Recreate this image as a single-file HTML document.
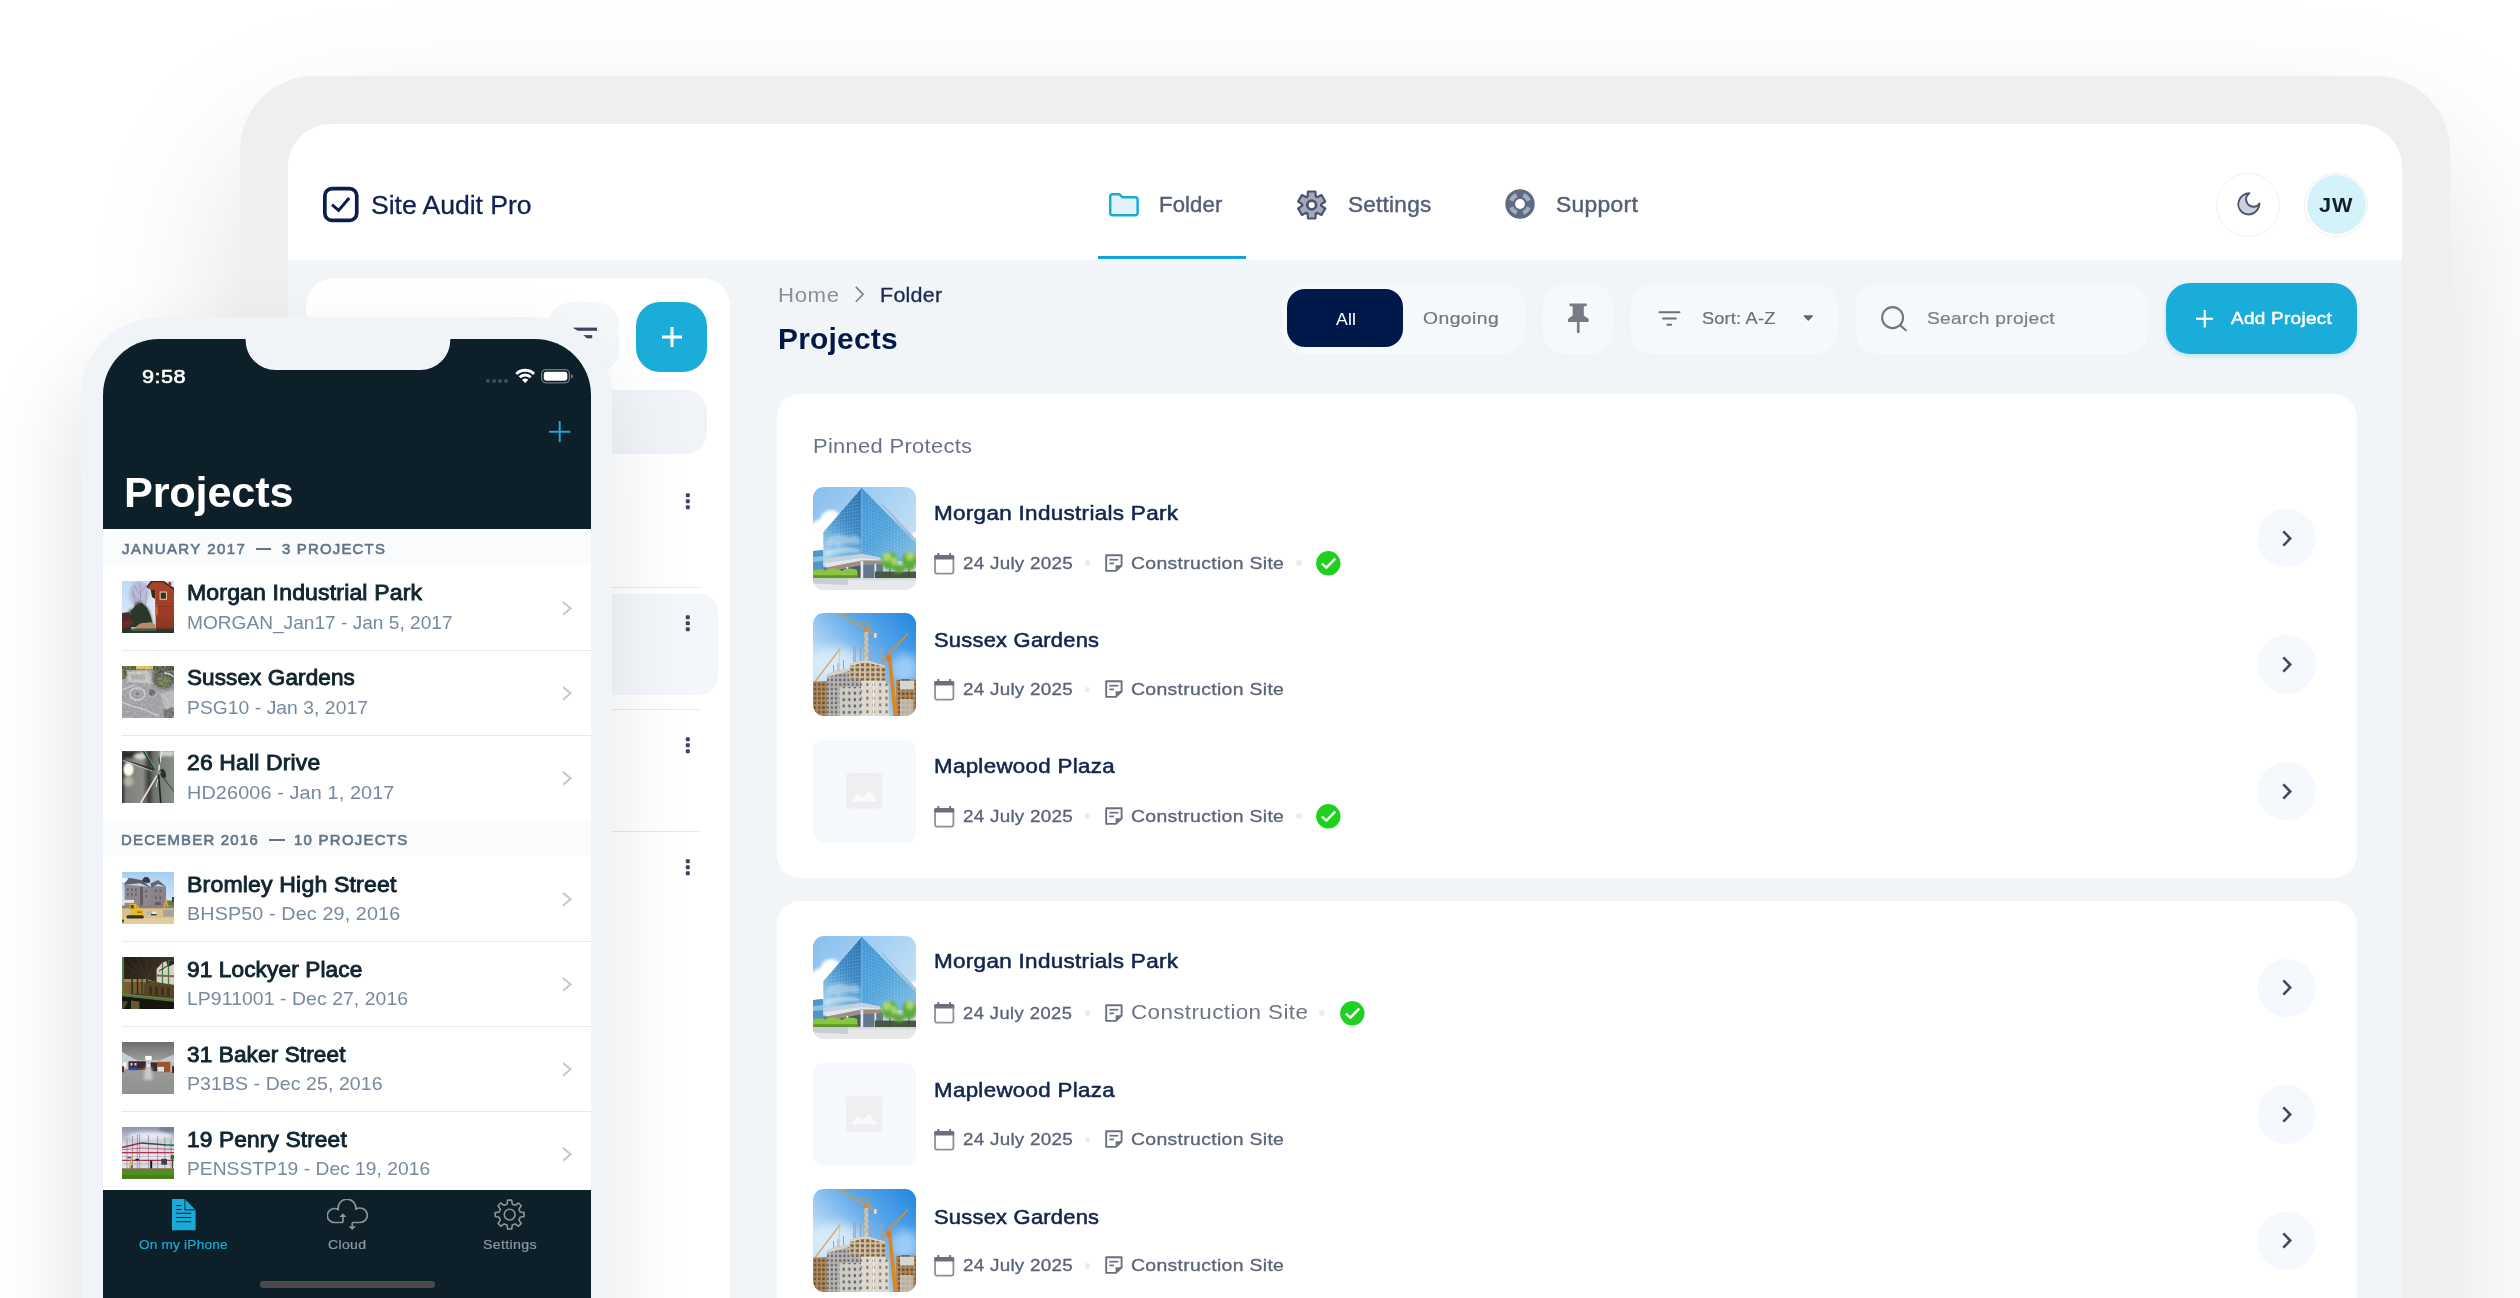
<!DOCTYPE html><html><head><meta charset="utf-8"><title>Site Audit Pro</title><style>
html,body{margin:0;padding:0;width:2520px;height:1298px;overflow:hidden}
body{background:#fff;position:relative;font-family:"Liberation Sans",sans-serif}
#root{position:absolute;left:0;top:0;width:2520px;height:1298px;overflow:hidden;background:#fff}
.a{position:absolute;display:block}
.t{position:absolute;line-height:0;white-space:nowrap;display:block}
#tab{left:240px;top:76px;width:2210px;height:1500px;border-radius:74px;background:#efefef;box-shadow:0 75px 160px rgba(0,0,0,.13)}
#scr{left:288px;top:124px;width:2114px;height:1400px;border-radius:43px;background:#f1f5f8;overflow:hidden}
#scr>.o{left:-288px;top:-124px}
#ph{left:81px;top:317px;width:531px;height:1300px;border-radius:79px;background:#f0f4f8;box-shadow:-8px 45px 90px rgba(0,0,0,.115)}
#pscr{left:103px;top:339px;width:488px;height:1300px;border-radius:56px;background:#fff;overflow:hidden}
#pscr>.o{left:-103px;top:-339px}
</style></head><body>
<div id="root">
<svg width="0" height="0" style="position:absolute"><symbol id="p_glass" viewBox="0 0 103 103">
<defs>
<linearGradient id="gA" x1="0" y1="0" x2="1" y2="0.8"><stop offset="0" stop-color="#86bdee"/><stop offset=".5" stop-color="#aad3f4"/><stop offset="1" stop-color="#cfe6f8"/></linearGradient>
<linearGradient id="gB" x1="0.9" y1="0" x2="0.35" y2="1"><stop offset="0" stop-color="#256fa9"/><stop offset=".45" stop-color="#3685c1"/><stop offset=".72" stop-color="#5fa5d6"/><stop offset="1" stop-color="#a0cde9"/></linearGradient>
<linearGradient id="gC" x1="0" y1="0" x2="0.8" y2="1"><stop offset="0" stop-color="#3a93d2"/><stop offset=".55" stop-color="#4fa2da"/><stop offset="1" stop-color="#79b9e3"/></linearGradient>
<pattern id="gG" width="2.6" height="3.3" patternUnits="userSpaceOnUse" patternTransform="skewY(-8)"><path d="M0,0 H2.6 M0,0 V3.3" stroke="#cfeaff" stroke-width="0.55" opacity=".5"/></pattern>
<pattern id="gH" width="2.9" height="3.3" patternUnits="userSpaceOnUse" patternTransform="skewY(20)"><path d="M0,0 H2.9 M0,0 V3.3" stroke="#d7eeff" stroke-width="0.5" opacity=".45"/></pattern>
<filter id="gF" x="-5%" y="-5%" width="110%" height="110%"><feGaussianBlur stdDeviation=".55"/></filter>
<filter id="gF2" x="-20%" y="-20%" width="140%" height="140%"><feGaussianBlur stdDeviation="1.6"/></filter>
</defs>
<rect width="103" height="103" fill="url(#gA)"/>
<g filter="url(#gF)">
<g fill="#fff" filter="url(#gF2)"><ellipse cx="4" cy="56" rx="11" ry="13"/><ellipse cx="18" cy="35" rx="11" ry="12"/><ellipse cx="9" cy="44" rx="12" ry="12"/><ellipse cx="22" cy="48" rx="8" ry="10"/><ellipse cx="102" cy="50" rx="4" ry="5"/></g>
<polygon points="0,64 8,63 10.3,63 10.3,84 0,84" fill="#4f97cb"/><polygon points="0,70 10.3,69 10.3,74 0,75" fill="#8cc1e3"/>
<polygon points="48.8,0.9 10.3,45.3 10.3,78 48.8,70" fill="url(#gB)"/>
<polygon points="48.8,0.9 103,56 103,76 67.7,72 48.8,70" fill="url(#gC)"/>
<polygon points="48.8,0.9 10.3,45.3 10.3,72 48.8,66.8" fill="url(#gG)"/>
<polygon points="48.8,0.9 103,56 103,72 48.8,66.8" fill="url(#gH)"/>
<polygon points="67.7,17 70,17.4 103,52 103,56.5" fill="#9fb9d0" opacity=".85"/>
<path d="M14,52 Q24,44 36,50 Q44,46 47,52 L47,58 Q34,54 26,60 Q18,56 14,60 Z" fill="#cfe7f6" opacity=".5" filter="url(#gF2)"/>
<path d="M12,64 Q30,58 47,62 L47,66 Q30,63 12,69 Z" fill="#e3f2fb" opacity=".55" filter="url(#gF2)"/>
<path d="M48.8,4 V68" stroke="#7fc0ea" stroke-width=".8" opacity=".8"/>
<polygon points="10.3,72 48.8,66.8 67.7,70.3 67.7,73 48.8,73.5 13.9,80.6 10.3,78" fill="#c3d2df"/>
<polygon points="10.3,76.5 48.8,71 67.7,72.8 67.7,73.5 48.8,73.5 13.9,80.6" fill="#dfe7ee"/>
<polygon points="13.9,80.6 48.8,73.5 67.7,73.5 70,77 48.8,77.5 18,84" fill="#a28d7b"/>
<polygon points="10.3,80 14,80.6 18,84 48.8,77.5 70,77 70,91.4 10.3,91.4" fill="#66788a"/>
<polygon points="20,84 48,78.5 48,90 20,90" fill="#3e4d5b" opacity=".7"/>
<g fill="#e6ebef"><rect x="23" y="82" width="1.5" height="9"/><rect x="33.4" y="80" width="1.8" height="11"/><rect x="47.6" y="74" width="2.6" height="17.5"/><rect x="61.5" y="77" width="1.7" height="14"/></g>
<rect x="62" y="84.5" width="41" height="6.9" fill="#4a5843"/>
<g filter="url(#gF2)"><g fill="#5faa3c"><ellipse cx="76.5" cy="74" rx="8.5" ry="9"/><ellipse cx="96.5" cy="74" rx="7.5" ry="9.5"/><ellipse cx="86" cy="82" rx="6" ry="4"/></g>
<g fill="#a5d86a"><ellipse cx="74" cy="70" rx="4.5" ry="4.5"/><ellipse cx="81" cy="74" rx="3" ry="4"/><ellipse cx="97" cy="69" rx="4" ry="4.5"/></g></g>
<g stroke="#3a3a2c" stroke-width=".7"><path d="M77,82 V91 M96,82 V91"/></g>
<g fill="#8bc540"><rect x="0" y="83.8" width="44.5" height="7.6" rx="3"/><ellipse cx="6" cy="84.5" rx="6" ry="2.2"/><ellipse cx="20" cy="84" rx="8" ry="2.4"/><ellipse cx="37" cy="84" rx="7.5" ry="2.6"/></g>
<rect x="0" y="88.2" width="44.5" height="3.2" fill="#5c9a2e"/>
<rect x="0" y="91.4" width="103" height="11.6" fill="#e7e8e9"/>
<polygon points="0,91.8 35,91.8 35,98 0,96.4" fill="#c9cdd1"/>
<rect x="35" y="91.4" width="68" height="2" fill="#d9dbdd"/>
</g>
</symbol><symbol id="p_crane" viewBox="0 0 103 103">
<defs>
<linearGradient id="cA" x1="1" y1="0" x2="0" y2=".9"><stop offset="0" stop-color="#1f86e0"/><stop offset=".35" stop-color="#5aa7ea"/><stop offset=".7" stop-color="#b4d7f6"/><stop offset="1" stop-color="#dcecfb"/></linearGradient>
<pattern id="cG" width="5.2" height="4.9" patternUnits="userSpaceOnUse"><rect width="5.2" height="4.9" fill="#d3c3a6"/><rect x="1.1" y="1.3" width="3.2" height="3" fill="#7b5f41"/></pattern>
<pattern id="cH" width="4.2" height="4.6" patternUnits="userSpaceOnUse"><rect width="4.2" height="4.6" fill="#b9b4ab"/><rect x=".9" y="1.2" width="2.3" height="2.6" fill="#5f6b7d"/></pattern>
<pattern id="cI" width="4.2" height="4.6" patternUnits="userSpaceOnUse"><rect width="4.2" height="4.6" fill="#b48a5c"/><rect x=".9" y="1.2" width="2.4" height="2.6" fill="#6b5038"/></pattern>
<pattern id="cP" width="6.4" height="6.8" patternUnits="userSpaceOnUse"><rect width="6.4" height="6.8" fill="#dfd9ce"/><rect x="2.2" y="2.2" width="1.9" height="2.8" fill="#6f6a66"/></pattern>
<pattern id="cQ" width="5.6" height="6.4" patternUnits="userSpaceOnUse"><rect width="5.6" height="6.4" fill="#cfccc5"/><rect x="1.6" y="2" width="2.2" height="2.8" fill="#59606c"/></pattern>
<filter id="cF" x="-5%" y="-5%" width="110%" height="110%"><feGaussianBlur stdDeviation=".5"/></filter>
<filter id="cF2" x="-30%" y="-30%" width="160%" height="160%"><feGaussianBlur stdDeviation="5"/></filter>
</defs>
<rect width="103" height="103" fill="url(#cA)"/>
<ellipse cx="22" cy="50" rx="26" ry="16" fill="#e6f2fc" opacity=".7" filter="url(#cF2)"/>
<ellipse cx="92" cy="55" rx="14" ry="14" fill="#cfe5f9" opacity=".6" filter="url(#cF2)"/>
<g filter="url(#cF)">
<g stroke="#d6ab6e" fill="none"><path d="M2.2,68.5 L27.3,35.4" stroke-width="1.5"/><path d="M26.5,37 V58" stroke-width=".5" stroke="#b9b9b9"/></g>
<g stroke="#97a4b6" stroke-width="1"><path d="M40.8,31.5 V49 M42.3,33 V49 M47.5,34 V48 M57.8,33.5 V47.5 M68.1,33.5 V50 M69.9,35 V50 M20.5,52 V60 M25,50 V58 M30.5,47 V56"/></g>
<rect x="83" y="66.8" width="20" height="36.2" fill="url(#cI)"/>
<rect x="87" y="67.5" width="14" height="9" fill="#d9d6d0"/><rect x="88" y="66" width="9" height="1.6" fill="#5b6a8c"/>
<rect x="87" y="86" width="13" height="17" fill="#cfcac0" opacity=".75"/>
<polygon points="0,68.5 14,68 14,103 0,103" fill="url(#cI)"/>
<polygon points="13.9,61.5 22,58 36.3,56 36.3,103 13.9,103" fill="url(#cH)"/>
<polygon points="13.9,61.5 22,58 36.3,56 36.3,58 13.9,64" fill="#d9d2c2"/>
<polygon points="36.3,51.5 52.4,47 72.1,52.4 72.1,68 36.3,68" fill="url(#cG)"/>
<polygon points="36.3,51.5 52.4,47 72.1,52.4 72.1,54 52.4,49 36.3,53.2" fill="#e3d6bd"/>
<rect x="36.3" y="66" width="12" height="37" fill="url(#cH)"/>
<rect x="26.4" y="74" width="22" height="29" fill="url(#cQ)"/>
<polygon points="48,67.7 72.1,67.7 75.7,72 75.7,103 48,103" fill="url(#cP)"/>
<rect x="60" y="67.7" width="1.2" height="35.3" fill="#efeae0"/>
<g stroke="#c99a56" fill="none"><path d="M27.3,0.9 L63.2,22.8" stroke-width="1.8"/><path d="M44,11 L53,8.5 L60,20" stroke-width=".8"/></g>
<rect x="51.5" y="17.5" width="3.6" height="30" fill="#dccba6"/><path d="M51.5,20 l3.6,3 l-3.6,3 l3.6,3 l-3.6,3 l3.6,3 l-3.6,3 l3.6,3 l-3.6,3" stroke="#c08a48" stroke-width=".6" fill="none"/>
<rect x="51" y="13.5" width="4.6" height="5.5" fill="#c4924f"/><rect x="61" y="20" width="2.6" height="4.8" fill="#e6dcc6"/>
<polygon points="74.4,41.7 78,41.7 84.6,103 80.4,103" fill="#d88928"/>
<g stroke="#d88f33" fill="none"><path d="M69.4,47.4 L95.4,20.2" stroke-width="1.6"/><path d="M76,41.7 L70,47" stroke-width="1"/></g>
<rect x="73.6" y="41.7" width="4.6" height="6.3" fill="#cf7f22"/>
</g>
</symbol><symbol id="t1" viewBox="0 0 52 52">
<defs><filter id="tb" x="-3%" y="-3%" width="106%" height="106%"><feGaussianBlur stdDeviation=".45"/></filter><filter id="tb2" x="-30%" y="-30%" width="160%" height="160%"><feGaussianBlur stdDeviation="1.6"/></filter><filter id="tb3" x="-30%" y="-30%" width="160%" height="160%"><feGaussianBlur stdDeviation="3"/></filter><linearGradient id="t1a" x1="0" y1="0" x2=".6" y2="1"><stop offset="0" stop-color="#b7dcf7"/><stop offset=".6" stop-color="#dfe6f6"/><stop offset="1" stop-color="#eceaf4"/></linearGradient>
<linearGradient id="t1b" x1="0" y1="0" x2="0" y2="1"><stop offset="0" stop-color="#a9442b"/><stop offset=".5" stop-color="#a03f28"/><stop offset="1" stop-color="#86351f"/></linearGradient></defs>
<rect width="52" height="52" fill="url(#t1a)"/>
<g filter="url(#tb)">
<ellipse cx="17" cy="13" rx="10" ry="13" fill="#a99dc2" opacity=".55" filter="url(#tb2)"/>
<g stroke="#8d7f9f" stroke-width=".6" opacity=".8" fill="none"><path d="M19,28 L18,2 M19,16 L12,4 M18.5,12 L25,3 M14,28 L11,8 M23,26 L25,10 M18,20 L9,12"/></g>
<path d="M7,30 Q10,26 12,30 L14,22 Q18,19 20,23 L22,24 Q26,26 28,33 L31,44 L7,46 Z" fill="#2e3a2c" filter="url(#tb2)"/>
<polygon points="7,46 9,30 14,24 20,22 25,27 29,36 31,46" fill="#2c372b"/>
<polygon points="0,32 7,31 9,36 9,50 0,50" fill="#4b2d27"/>
<polygon points="24.8,6.5 29.7,0 41,0 52,7.5 52,52 34,52 33.2,24 33.2,9 28.7,9" fill="url(#t1b)"/>
<polygon points="28.7,9 33.2,9 33.2,18 30,16" fill="#4a2418"/>
<path d="M24.8,6.5 L29.7,0.4 L41,0.4 L52,8" stroke="#3c2a29" stroke-width="1.6" fill="none"/>
<rect x="46.5" y="1" width="2.6" height="3.4" fill="#8a3a28"/>
<rect x="37.6" y="10.5" width="7.4" height="8.3" fill="#d9c99a"/><rect x="38.7" y="11.6" width="5.2" height="6.1" fill="#3b2a2a"/>
<rect x="33.2" y="24" width="2.6" height="10" fill="#d2703a" opacity=".8"/>
<rect x="33.2" y="25" width="18.8" height="1" fill="#7f311e" opacity=".6"/>
<polygon points="0,40 9,39 12,42 0,48" fill="#6a2f2a"/>
<path d="M13,47 Q18,41 24,42 Q30,40 33.6,44 L33.6,48.5 L13,48.5 Z" fill="#b98a72"/>
<rect x="0" y="47.5" width="52" height="2" fill="#3a2a22" opacity=".75"/>
<rect x="0" y="49.3" width="52" height="2.7" fill="#1f3d26"/>
</g></symbol><symbol id="t2" viewBox="0 0 52 52">
<defs><filter id="t2n" x="0" y="0" width="1" height="1"><feTurbulence type="fractalNoise" baseFrequency=".42" numOctaves="3" seed="7"/><feColorMatrix values="0 0 0 0 .86  0 0 0 0 .86  0 0 0 0 .88  1.6 0 0 0 -.62"/></filter>
<filter id="t2m" x="0" y="0" width="1" height="1"><feTurbulence type="fractalNoise" baseFrequency=".5" numOctaves="2" seed="21"/><feColorMatrix values="0 0 0 0 .36  0 0 0 0 .36  0 0 0 0 .38  0 1.7 0 0 -.7"/></filter></defs>
<rect width="52" height="52" fill="#9d9da1"/>
<g filter="url(#tb)">
<rect x="0" y="0" width="52" height="4" fill="#4a5a2c"/><rect x="14" y="0" width="18" height="3.4" fill="#d9c24a"/><rect x="31" y="0" width="21" height="5" fill="#3f4b35"/>
<polygon points="5.5,6 24,4.5 30.7,9 31,17.7 5.5,16" fill="#c6c6c3"/>
<rect x="9" y="8.5" width="14" height="5" fill="#aeaca6"/>
<ellipse cx="42" cy="12" rx="12" ry="11" fill="#46513a" filter="url(#tb2)"/>
<ellipse cx="41.5" cy="15.5" rx="6" ry="5.5" fill="#66703f" filter="url(#tb2)"/>
<ellipse cx="2" cy="8" rx="3" ry="5" fill="#4f5a34"/>
<path d="M42,7 Q48,7 52,11" stroke="#c9d3d6" stroke-width="1.6" fill="none"/>
<ellipse cx="15.4" cy="28" rx="7.6" ry="6" fill="#9a9ca3" stroke="#c9cbd0" stroke-width="1.9"/>
<ellipse cx="15.4" cy="28" rx="2" ry="1.4" fill="#6f7177"/>
<ellipse cx="30" cy="26.5" rx="4" ry="4" fill="#5b5b59" stroke="#b5b5b3" stroke-width="1"/>
<path d="M0,24 L12,19 M0,36 L10,40 L24,44 L36,50" stroke="#c9c9cc" stroke-width="1.5" fill="none"/>
<ellipse cx="47" cy="47" rx="6" ry="6" fill="#5c5c5e" opacity=".8"/>
<polygon points="38,28 52,24 52,40 44,44" fill="#b9b9bd"/>
</g>
<rect width="52" height="52" filter="url(#t2n)" opacity=".5"/>
<rect width="52" height="52" filter="url(#t2m)" opacity=".75"/>
</symbol><symbol id="t3" viewBox="0 0 52 52">
<defs><linearGradient id="t3a" x1="0" y1="0" x2="1" y2="0"><stop offset="0" stop-color="#2d3330"/><stop offset=".08" stop-color="#7e7f7b"/><stop offset=".4" stop-color="#8b8b87"/><stop offset=".52" stop-color="#3b3d39"/><stop offset=".62" stop-color="#6f766e"/><stop offset="1" stop-color="#859085"/></linearGradient>
<radialGradient id="t3b"><stop offset="0" stop-color="#fffdf2"/><stop offset=".6" stop-color="#fbf8ea"/><stop offset="1" stop-color="#fbf8ea" stop-opacity="0"/></radialGradient></defs>
<rect width="52" height="52" fill="url(#t3a)"/>
<g filter="url(#tb)">
<polygon points="0,0 20,0 16,6 0,8" fill="#252b29" filter="url(#tb2)"/>
<rect x="38" y="0" width="14" height="5" fill="#d5d8d8" filter="url(#tb2)"/>
<ellipse cx="18" cy="5.2" rx="6.5" ry="3.2" fill="#dcdcd8" filter="url(#tb2)"/>
<ellipse cx="6.5" cy="18.5" rx="6.2" ry="8.2" fill="url(#t3b)"/>
<ellipse cx="6.5" cy="30.5" rx="5" ry="5" fill="#cbc5b2" opacity=".75" filter="url(#tb2)"/>
<polygon points="0.6,8.1 33.5,18 30.5,19.6" fill="#2b302f"/><path d="M0.6,9.3 L30.5,20.2" stroke="#d9d4dc" stroke-width=".7"/>
<path d="M31.7,17 L21.3,0" stroke="#1f4a44" stroke-width="1.7"/><path d="M32.6,16.6 L22.6,0" stroke="#b9c9c6" stroke-width=".5"/>
<path d="M36.6,20 L39.6,0" stroke="#e3e9e9" stroke-width="1.5"/><path d="M38,14 L37,6" stroke="#2d4a4a" stroke-width="1"/>
<path d="M35.1,24.4 L18.8,52" stroke="#eadfe8" stroke-width="1.9"/><path d="M36.2,24.6 L20.4,52" stroke="#4a3f4a" stroke-width=".5"/>
<path d="M36.6,24 L38.8,52" stroke="#1e2628" stroke-width="1.7"/>
<path d="M38,22 L52,40.7" stroke="#2a3634" stroke-width=".9"/>
<path d="M36,28 L34,36" stroke="#cfd5d3" stroke-width="1"/>
<ellipse cx="41" cy="22.5" rx="2.6" ry="4.8" fill="#2a2f2e" transform="rotate(-20 41 22.5)"/>
<circle cx="36.6" cy="21.3" r="2.3" fill="#8f9390"/>
</g></symbol><symbol id="t4" viewBox="0 0 52 52">
<defs><linearGradient id="t4a" x1="0" y1="0" x2="0" y2="1"><stop offset="0" stop-color="#a5cdf1"/><stop offset="1" stop-color="#deecf9"/></linearGradient></defs>
<rect width="52" height="36" fill="url(#t4a)"/>
<g filter="url(#tb)">
<ellipse cx="2" cy="8" rx="4" ry="2" fill="#fff" opacity=".9"/>
<rect x="44" y="28.5" width="8" height="8" fill="#5f7d4c"/><rect x="50" y="25" width="2" height="5" fill="#3a3f3a"/>
<polygon points="2.6,12.6 29.7,15 29.7,35 2.6,34.5" fill="#8f878e"/>
<polygon points="28.7,14 44,14.6 44,35.5 28.7,35.5" fill="#8a8289"/>
<polygon points="7,5.7 20.3,8.3 29.2,16 18,11.2 1.6,12.8" fill="#5f5e63"/>
<polygon points="28.5,11.5 36.1,7.9 44.2,14.8 36,12 29.5,15.5" fill="#66646a"/>
<path d="M20.3,9.5 Q20.5,4.9 24.2,4.9 Q28.2,4.9 28.2,10.5 L25,11 Z" fill="#3a3a45"/>
<g fill="#5d5660" opacity=".85"><rect x="5" y="16" width="1.6" height="2.6"/><rect x="9" y="16.3" width="1.6" height="2.6"/><rect x="13" y="16.6" width="1.6" height="2.6"/><rect x="5" y="21" width="1.6" height="2.6"/><rect x="9" y="21.2" width="1.6" height="2.6"/><rect x="13" y="21.4" width="1.6" height="2.6"/><rect x="18" y="15" width="3" height="19"/><rect x="23.5" y="18" width="1.6" height="2.6"/><rect x="23.5" y="23" width="1.6" height="2.6"/><rect x="33" y="17.5" width="1.7" height="2.6"/><rect x="37.5" y="17.5" width="1.7" height="2.6"/><rect x="33" y="24.5" width="1.7" height="2.6"/><rect x="37.5" y="24.5" width="1.7" height="2.6"/><rect x="33" y="30" width="6" height="3"/></g>
<rect x="2" y="27.9" width="10" height="3" fill="#e3e3e8"/>
<rect x="0" y="33.5" width="52" height="4" fill="#8c7f78"/>
<rect x="0" y="36.3" width="52" height="15.7" fill="#d9c08e"/>
<rect x="0" y="46" width="52" height="6" fill="#e2cd9d"/>
<rect x="41" y="37.7" width="11" height="6.9" fill="#a8a498"/>
<path d="M42,36 L44,28.5 L46,35" stroke="#e0a030" stroke-width="1.7" fill="none"/>
<rect x="7.5" y="31.8" width="6.4" height="6" fill="#e6b81c"/><rect x="8.6" y="33" width="3.2" height="3.4" fill="#4a4a5a"/>
<path d="M13,32 L17,37" stroke="#e6b81c" stroke-width="1.5"/>
<rect x="9" y="37.7" width="12.3" height="5.5" fill="#e8ba1e"/><rect x="15" y="39.5" width="5" height="1.4" fill="#9a6a1a"/>
<rect x="4.5" y="43.2" width="17.3" height="3.4" rx="1.5" fill="#3a2e22"/>
<rect x="24" y="39" width="6" height="4" fill="#b9b5a8"/>
<rect x="30.2" y="39.7" width="3.9" height="2.6" fill="#e8ecf0"/><rect x="29" y="42" width="5.5" height="1.4" fill="#3a3a3e"/>
<rect x="0" y="47.5" width="2" height="3" fill="#6a4a3a"/>
</g></symbol><symbol id="t5" viewBox="0 0 52 52">
<defs><linearGradient id="t5a" x1="0" y1="0" x2="1" y2=".6"><stop offset="0" stop-color="#1f1b12"/><stop offset=".6" stop-color="#3a2f22"/><stop offset="1" stop-color="#4a3e2c"/></linearGradient></defs>
<rect width="52" height="52" fill="url(#t5a)"/>
<g filter="url(#tb)">
<polygon points="34.6,12 40,6 46,3.2 52,3.2 52,28 34.6,26" fill="#d6d3c1"/>
<polygon points="44,3.2 52,3.2 52,7 46,10" fill="#2a2a20"/>
<g stroke="#3f7a4a" stroke-width="1.3"><path d="M40.5,6 V27 M46.5,3.2 V27.5"/></g>
<path d="M34.6,18.5 L52,19.2" stroke="#7a6a48" stroke-width="2"/>
<path d="M37,14 L52,5" stroke="#2f2a22" stroke-width="1"/>
<g stroke="#4a3a2a" stroke-width=".7" opacity=".9"><path d="M6,2 L25.7,22.4 M14,0 L25.7,22.4 M24,0 L25.7,22.4 M34,0 L25.7,22.4 M2,8 L25.7,22.4"/></g>
<polygon points="25.7,22.4 38.6,26.5 38.6,28 25.7,23.5" fill="#5fbf6a"/>
<rect x="2" y="22" width="22" height="14.8" fill="#7a5a30"/>
<rect x="2" y="22" width="22" height="3" fill="#c9a85a" opacity=".55"/>
<g fill="#25301f"><rect x="9.4" y="14" width="1.6" height="23"/><rect x="14.8" y="16" width="1.5" height="21"/><rect x="19.4" y="18" width="1.1" height="18"/></g>
<polygon points="21.8,27 28,24 52,27.9 52,40 21.8,38" fill="#5a4428"/>
<g fill="#3a2c1a" opacity=".7"><rect x="27" y="29" width="3" height="9"/><rect x="33" y="29.5" width="3" height="9"/><rect x="39" y="30" width="3" height="9"/><rect x="45" y="30.5" width="3" height="9"/></g>
<rect x="0" y="0" width="2.1" height="37" fill="#4f7a44"/>
<polygon points="0,36.8 52,42.2 52,45 0,39.6" fill="#51703e"/>
<path d="M0,36.8 L52,42.2" stroke="#7d9850" stroke-width=".8"/>
<polygon points="0,39.6 52,45 52,52 0,52" fill="#14140f"/>
<polygon points="9,43.5 17.4,44.4 17.4,52 9,52" fill="#7a6a3a" opacity=".8"/>
<polygon points="0,44 6,44.5 2,52 0,52" fill="#6a5a34" opacity=".7"/>
</g></symbol><symbol id="t6" viewBox="0 0 52 52">
<defs><linearGradient id="t6a" x1="0" y1="0" x2="0" y2="1"><stop offset="0" stop-color="#6c6e6c"/><stop offset="1" stop-color="#9c9e9c"/></linearGradient>
<linearGradient id="t6c" x1="0" y1="0" x2="0" y2="1"><stop offset="0" stop-color="#a5a7a5"/><stop offset="1" stop-color="#8f918f"/></linearGradient></defs>
<rect width="52" height="52" fill="url(#t6c)"/>
<g filter="url(#tb)">
<polygon points="0,0 52,0 52,12.4 37.6,18.4 15.4,18.4 0,10" fill="url(#t6a)"/>
<polygon points="0,10 15.4,18.4 15.4,25.3 0,28.2" fill="#c9cbd5"/>
<polygon points="52,12.4 37.6,18.4 37.6,21.3 52,21.3" fill="#c5c7cc"/>
<rect x="15.4" y="18.4" width="22.2" height="7" fill="#c3c5cb"/>
<rect x="23.3" y="13.9" width="6.4" height="4.5" fill="#fdfdfd"/>
<rect x="24.8" y="22.3" width="3.4" height="3" fill="#eeeef0"/>
<rect x="1.1" y="20.3" width="2.9" height="5" fill="#f5f5f8"/>
<rect x="0" y="24.3" width="2" height="6" fill="#6a2a22"/>
<rect x="6.5" y="19.3" width="17.3" height="8.4" fill="#3b2531"/>
<rect x="8.5" y="21" width="2" height="2.6" fill="#d9d9e0"/><rect x="12.5" y="21" width="2" height="2.6" fill="#cfcfd6"/>
<rect x="7.5" y="25.3" width="8.4" height="2.9" fill="#2848b8"/>
<rect x="16.5" y="26" width="5" height="2" fill="#5a4a3a"/>
<rect x="28.7" y="20.3" width="6.4" height="8.9" fill="#3a2a2a"/>
<rect x="35.1" y="19.8" width="13.3" height="10.4" fill="#9a5428"/>
<rect x="35.4" y="24.8" width="6.6" height="4.9" fill="#dcdce6"/>
<rect x="48.4" y="21" width="3.6" height="9" fill="#b9b9c0"/><rect x="50" y="24" width="2" height="7" fill="#5a2a2a"/>
<polygon points="23,25.3 29.7,25.3 30.5,38 21.5,38" fill="#c9cbc9" filter="url(#tb2)"/>
</g></symbol><symbol id="t7" viewBox="0 0 52 52">
<defs><linearGradient id="t7a" x1="0" y1="0" x2="0" y2="1"><stop offset="0" stop-color="#8f95b0"/><stop offset="1" stop-color="#dfe1eb"/></linearGradient></defs>
<rect width="52" height="52" fill="#e4e4ee"/>
<rect width="52" height="20" fill="url(#t7a)"/>
<g filter="url(#tb)">
<ellipse cx="46" cy="2" rx="10" ry="3.4" fill="#787d94" filter="url(#tb2)"/>
<ellipse cx="28" cy="9" rx="22" ry="4" fill="#e6e7f0" filter="url(#tb2)"/>
<polygon points="0,20.5 18.8,16 52,18.5 52,27.4 0,27.4" fill="#dadae4"/>
<rect x="0" y="27.4" width="52" height="14.6" fill="#e6e6f0"/>
<rect x="6" y="33.5" width="46" height="8.3" fill="#d3d3de" opacity=".6"/>
<g stroke="#8a8fa5" stroke-width=".8"><path d="M10.5,9 V41 M15.4,7.4 V41 M17.6,7.2 V41 M26.5,8 V41 M35.6,9 V41 M42.8,10.4 V41 M5,12 V41 M49,13 V41"/></g>
<path d="M0,20.5 L18.8,16" stroke="#9a2c40" stroke-width="1.6" fill="none"/><path d="M18.8,16 L52,18.5" stroke="#3f4450" stroke-width="1.7" fill="none"/>
<rect x="44" y="17" width="8" height="1.4" fill="#3f9a86"/>
<g stroke="#b03048" stroke-width="1.1" fill="none"><path d="M0,25.6 H52"/><path d="M0,33.4 H52"/><path d="M0,22.8 L18.8,21 L52,22.4" opacity=".6"/></g>
<g stroke="#9a9fb5" stroke-width=".6"><path d="M0,29.5 H52 M0,37 H52"/></g>
<rect x="13.4" y="31.8" width="3.5" height="1.6" fill="#1c1c24"/>
<rect x="28.2" y="33.6" width="2" height="8.2" fill="#17171d"/>
<rect x="39.3" y="31.8" width="5.7" height="5.9" fill="#3c414c"/>
<rect x="5.5" y="29.8" width="3.4" height="1.5" fill="#4a3fb0"/><rect x="9" y="38.3" width="1.5" height="3.4" fill="#5a3fa0"/>
<path d="M10.5,27.4 L7.7,41.7" stroke="#d9b050" stroke-width="1.6"/>
<ellipse cx="50.5" cy="30" rx="2" ry="2.6" fill="#3f6a2a"/><rect x="50" y="31" width="1" height="10" fill="#3a4a2a"/>
<rect x="0" y="41.3" width="52" height="1.6" fill="#8a5a3a"/>
<rect x="0" y="42.6" width="52" height="9.4" fill="#4f8f24"/><rect x="0" y="48" width="52" height="4" fill="#44801f"/>
</g></symbol></svg>
<div id="tab" class="a"></div>
<div id="scr" class="a"><div class="o a">
<div class="a" style="left:288px;top:124px;width:2114px;height:136px;background:#fff;"></div>
<div class="a" style="left:1098px;top:256px;width:148px;height:3px;background:#14a3d6;"></div>
<svg class="a" style="left:321px;top:185px;" width="40" height="40" viewBox="0 0 40 40"><rect x="3.85" y="3.65" width="31.9" height="31.7" rx="7" fill="none" stroke="#0b1d4d" stroke-width="3.7"/><path d="M11,19.7 L17.6,25.4 L28.2,13.1" fill="none" stroke="#0b1d4d" stroke-width="3" stroke-linejoin="miter"/></svg>
<span class="t" style="left:370.64px;top:205.08px;font-size:26.6px;color:#0f2350;font-weight:normal;letter-spacing:-0.041px;transform:scaleX(1.0002);transform-origin:0 50%;-webkit-text-stroke:0.3px #0f2350;">Site Audit Pro</span>
<svg class="a" style="left:1107px;top:191px;" width="34" height="28" viewBox="0 0 34 28"><path d="M5.3,3.2 H12.3 L15.5,6.3 H28.5 a2.1,2.1 0 0 1 2.1,2.1 V22.2 a2.1,2.1 0 0 1 -2.1,2.1 H5.3 a2.1,2.1 0 0 1 -2.1,-2.1 V5.3 a2.1,2.1 0 0 1 2.1,-2.1 z" fill="#e1f3fa" stroke="#1da9d8" stroke-width="2.5" stroke-linejoin="round"/></svg>
<span class="t" style="left:1159.41px;top:205.42px;font-size:21.3px;color:#555d78;font-weight:normal;letter-spacing:0.139px;transform:scaleX(1.0372);transform-origin:0 50%;-webkit-text-stroke:0.42px #555d78;">Folder</span>
<svg class="a" style="left:1297px;top:189.5px;" width="31" height="31" viewBox="0 0 31 31"><path d="M10.61,6.54 L10.97,1.51 L18.43,1.51 L18.79,6.54 L19.99,7.23 L24.52,5.02 L28.25,11.49 L24.07,14.31 L24.07,15.69 L28.25,18.51 L24.52,24.98 L19.99,22.77 L18.79,23.46 L18.43,28.49 L10.97,28.49 L10.61,23.46 L9.41,22.77 L4.88,24.98 L1.15,18.51 L5.33,15.69 L5.33,14.31 L1.15,11.49 L4.88,5.02 L9.41,7.23Z" fill="#a4a9b8" stroke="#4a5470" stroke-width="2.2" stroke-linejoin="round"/><circle cx="14.7" cy="15" r="4.4" fill="#fff" stroke="#4a5470" stroke-width="2.7"/></svg>
<span class="t" style="left:1347.61px;top:205.42px;font-size:21.3px;color:#555d78;font-weight:normal;letter-spacing:0.208px;transform:scaleX(1.0617);transform-origin:0 50%;-webkit-text-stroke:0.42px #555d78;">Settings</span>
<svg class="a" style="left:1505.0px;top:189.4px;" width="30" height="30" viewBox="0 0 30 30"><circle cx="15" cy="15" r="14.7" fill="#5f6b85"/><path d="M23.68,18.33 A9.3,9.3 0 0 1 18.33,23.68" fill="none" stroke="#a3adbf" stroke-width="4.3"/><path d="M11.67,23.68 A9.3,9.3 0 0 1 6.32,18.33" fill="none" stroke="#a3adbf" stroke-width="4.3"/><path d="M6.32,11.67 A9.3,9.3 0 0 1 11.67,6.32" fill="none" stroke="#a3adbf" stroke-width="4.3"/><path d="M18.33,6.32 A9.3,9.3 0 0 1 23.68,11.67" fill="none" stroke="#a3adbf" stroke-width="4.3"/><circle cx="15" cy="15" r="4.9" fill="#fff"/></svg>
<span class="t" style="left:1555.90px;top:205.42px;font-size:21.3px;color:#555d78;font-weight:normal;letter-spacing:0.275px;transform:scaleX(1.0721);transform-origin:0 50%;-webkit-text-stroke:0.42px #555d78;">Support</span>
<div class="a" style="left:2216px;top:172.5px;width:62px;height:62px;background:#fff;border-radius:32px;border:1px solid #eef0f3;"></div>
<svg class="a" style="left:2234px;top:191px;" width="28" height="28" viewBox="0 0 28 28"><path d="M15.4,2.3 C13,4 11.5,7 12.3,10 C13.2,13.2 16,15.5 19.5,15.8 C22,16 24.2,14.6 25.5,12.5 C25.2,16 23.5,19.6 20.5,21.6 C17,24 12,24.2 8.5,21.5 C4.8,18.7 3.3,13.8 5,9.5 C6.6,5.4 10.8,2.4 15.4,2.3 Z" fill="#cdd1dc" stroke="#4a5470" stroke-width="1.9" stroke-linejoin="round"/></svg>
<div class="a" style="left:2304px;top:172.5px;width:62px;height:62px;background:#fff;border-radius:32px;border:1px solid #eef0f3;"></div>
<div class="a" style="left:2306.5px;top:175px;width:59px;height:59px;background:#d4f2fa;border-radius:30px;"></div>
<span class="t" style="left:2319.03px;top:204.81px;font-size:19.6px;color:#12202e;font-weight:bold;letter-spacing:0.936px;transform:scaleX(1.1066);transform-origin:0 50%;">JW</span>
<div class="a" style="left:306px;top:278px;width:424px;height:1200px;background:#fff;border-radius:28px;"></div>
<div class="a" style="left:549px;top:302px;width:70px;height:70px;background:#f5f8fb;border-radius:22px;"></div>
<svg class="a" style="left:571px;top:326px;" width="28" height="24" viewBox="0 0 28 24"><g stroke="#3f4560" stroke-width="3.2" stroke-linecap="butt"><line x1="2.2" y1="3.2" x2="26" y2="3.2"/><line x1="7" y1="10.7" x2="21.2" y2="10.7"/><line x1="11" y1="18.2" x2="17.2" y2="18.2"/></g></svg>
<div class="a" style="left:636px;top:302px;width:71px;height:70px;background:#1aadd9;border-radius:24px;"></div>
<svg class="a" style="left:661.5px;top:327px;" width="20" height="20" viewBox="0 0 20 20"><g stroke="#fff" stroke-width="3" stroke-linecap="butt"><line x1="0" y1="10.0" x2="20" y2="10.0"/><line x1="10.0" y1="0" x2="10.0" y2="20"/></g></svg>
<div class="a" style="left:330px;top:390px;width:377px;height:64px;background:#f0f4f8;border-radius:22px;"></div>
<div class="a" style="left:330px;top:594px;width:388px;height:101px;background:#f3f6fa;border-radius:18px;"></div>
<div class="a" style="left:330px;top:586.5px;width:370px;height:1.5px;background:#e9e9eb;"></div>
<div class="a" style="left:330px;top:708.5px;width:370px;height:1.5px;background:#e9e9eb;"></div>
<div class="a" style="left:330px;top:830.5px;width:370px;height:1.5px;background:#e9e9eb;"></div>
<svg class="a" style="left:685px;top:492px;" width="6" height="18" viewBox="0 0 6 18"><g fill="#3f4560"><rect x="0.8" y="1.3" width="4" height="4" rx="1"/><rect x="0.8" y="7.3" width="4" height="4" rx="1"/><rect x="0.8" y="13.3" width="4" height="4" rx="1"/></g></svg>
<svg class="a" style="left:685px;top:614px;" width="6" height="18" viewBox="0 0 6 18"><g fill="#3f4560"><rect x="0.8" y="1.3" width="4" height="4" rx="1"/><rect x="0.8" y="7.3" width="4" height="4" rx="1"/><rect x="0.8" y="13.3" width="4" height="4" rx="1"/></g></svg>
<svg class="a" style="left:685px;top:736px;" width="6" height="18" viewBox="0 0 6 18"><g fill="#3f4560"><rect x="0.8" y="1.3" width="4" height="4" rx="1"/><rect x="0.8" y="7.3" width="4" height="4" rx="1"/><rect x="0.8" y="13.3" width="4" height="4" rx="1"/></g></svg>
<svg class="a" style="left:685px;top:858px;" width="6" height="18" viewBox="0 0 6 18"><g fill="#3f4560"><rect x="0.8" y="1.3" width="4" height="4" rx="1"/><rect x="0.8" y="7.3" width="4" height="4" rx="1"/><rect x="0.8" y="13.3" width="4" height="4" rx="1"/></g></svg>
<span class="t" style="left:778.10px;top:294.87px;font-size:20px;color:#8a8f9c;font-weight:normal;letter-spacing:0.558px;transform:scaleX(1.1095);transform-origin:0 50%;">Home</span>
<svg class="a" style="left:854.9px;top:286.1px;overflow:visible;" width="8.9" height="16.6" viewBox="0 0 8.9 16.6"><polyline points="0.85,0.85 8.05,8.30 0.85,15.75" fill="none" stroke="#7d828e" stroke-width="1.7" stroke-linejoin="miter" stroke-linecap="butt"/></svg>
<span class="t" style="left:880.36px;top:294.87px;font-size:20px;color:#1a2b52;font-weight:normal;letter-spacing:0.249px;transform:scaleX(1.0733);transform-origin:0 50%;-webkit-text-stroke:0.35px #1a2b52;">Folder</span>
<span class="t" style="left:777.93px;top:339.02px;font-size:28.8px;color:#00184a;font-weight:bold;letter-spacing:0.199px;transform:scaleX(1.0393);transform-origin:0 50%;">Projects</span>
<div class="a" style="left:1282px;top:284px;width:243px;height:70px;background:#f5f9fc;border-radius:22px;"></div>
<div class="a" style="left:1287px;top:289px;width:116px;height:58px;background:#00184a;border-radius:18px;"></div>
<span class="t" style="left:1335.83px;top:319.58px;font-size:16.8px;color:#fff;font-weight:normal;letter-spacing:0.143px;transform:scaleX(1.0513);transform-origin:0 50%;">All</span>
<span class="t" style="left:1423.16px;top:319.47px;font-size:17.1px;color:#70757f;font-weight:normal;letter-spacing:0.397px;transform:scaleX(1.1284);transform-origin:0 50%;-webkit-text-stroke:0.2px #70757f;">Ongoing</span>
<div class="a" style="left:1543px;top:284px;width:70px;height:70px;background:#f5f9fc;border-radius:22px;"></div>
<svg class="a" style="left:1566px;top:302px;" width="24" height="32" viewBox="0 0 24 32"><g fill="#767b86"><rect x="3.5" y="1.4" width="17.3" height="2.9" rx="0.7"/><path d="M6.7,3.8 H17.8 V13.6 L22.1,16.6 Q22.7,17 22.7,17.8 V19.2 Q22.7,19.9 22,19.9 H2.6 Q1.9,19.9 1.9,19.2 V17.8 Q1.9,17 2.5,16.6 L6.7,13.6 Z"/><rect x="10.9" y="19.5" width="2.7" height="11.6" rx="1.2"/></g></svg>
<div class="a" style="left:1631px;top:284px;width:207px;height:70px;background:#f5f9fc;border-radius:22px;"></div>
<svg class="a" style="left:1658px;top:311px;" width="24" height="16" viewBox="0 0 24 16"><g stroke="#6a6f7a" stroke-width="1.9" stroke-linecap="round"><line x1="1.5" y1="1.2" x2="21.5" y2="1.2"/><line x1="5" y1="7.5" x2="17.9" y2="7.5"/><line x1="9.4" y1="13.8" x2="13.2" y2="13.8"/></g></svg>
<span class="t" style="left:1702.40px;top:319.47px;font-size:17.1px;color:#6a6f7a;font-weight:normal;letter-spacing:0.168px;transform:scaleX(1.0649);transform-origin:0 50%;-webkit-text-stroke:0.2px #6a6f7a;">Sort: A-Z</span>
<svg class="a" style="left:1802.9px;top:315.3px;" width="11" height="7" viewBox="0 0 11 7"><path d="M1.2,0.9 H9.4 L5.3,5.1 Z" fill="#5f6470" stroke="#5f6470" stroke-width="1.2" stroke-linejoin="round"/></svg>
<div class="a" style="left:1856px;top:284px;width:292px;height:70px;background:#f5f9fc;border-radius:22px;"></div>
<svg class="a" style="left:1880px;top:305px;" width="28" height="28" viewBox="0 0 28 28"><g fill="none" stroke="#73777f" stroke-width="2.1" stroke-linecap="round"><circle cx="12.6" cy="12.6" r="10.5"/><line x1="20.2" y1="20.4" x2="25.8" y2="25.2"/></g></svg>
<span class="t" style="left:1927.16px;top:319.47px;font-size:17.1px;color:#7a7f88;font-weight:normal;letter-spacing:0.298px;transform:scaleX(1.1190);transform-origin:0 50%;-webkit-text-stroke:0.2px #7a7f88;">Search project</span>
<div class="a" style="left:2166px;top:283px;width:191px;height:71px;background:#1aadd9;border-radius:24px;box-shadow:0 2px 4px rgba(26,173,217,.25);"></div>
<svg class="a" style="left:2195.5px;top:310px;" width="17.5" height="17.5" viewBox="0 0 17.5 17.5"><g stroke="#fff" stroke-width="2.2" stroke-linecap="butt"><line x1="0" y1="8.75" x2="17.5" y2="8.75"/><line x1="8.75" y1="0" x2="8.75" y2="17.5"/></g></svg>
<span class="t" style="left:2231.20px;top:319.47px;font-size:17.1px;color:#fff;font-weight:normal;letter-spacing:0.281px;transform:scaleX(1.1053);transform-origin:0 50%;-webkit-text-stroke:0.5px #fff;">Add Project</span>
<div class="a" style="left:777px;top:394px;width:1580px;height:484px;background:#fff;border-radius:23px;"></div>
<div class="a" style="left:777px;top:900.7px;width:1580px;height:600px;background:#fff;border-radius:23px;"></div>
<span class="t" style="left:813.02px;top:445.77px;font-size:20px;color:#697185;font-weight:normal;letter-spacing:0.287px;transform:scaleX(1.0952);transform-origin:0 50%;">Pinned Protects</span>
<svg class="a" style="left:812.5px;top:486.5px;border-radius:11px" width="103" height="103" viewBox="0 0 103 103"><use href="#p_glass"/></svg>
<span class="t" style="left:933.60px;top:512.96px;font-size:20.6px;color:#13254f;font-weight:normal;letter-spacing:0.276px;transform:scaleX(1.0914);transform-origin:0 50%;-webkit-text-stroke:0.55px #13254f;">Morgan Industrials Park</span>
<svg class="a" style="left:934.2px;top:552.6px;" width="21" height="22" viewBox="0 0 21 22"><rect x="1" y="3" width="18.4" height="17.6" rx="2" fill="none" stroke="#8d919d" stroke-width="1.8"/><rect x="0.1" y="1.9" width="20.2" height="4.6" rx="1.6" fill="#6b7080"/><rect x="3.4" y="0" width="1.9" height="3" fill="#6b7080"/><rect x="15.2" y="0" width="1.9" height="3" fill="#6b7080"/></svg>
<span class="t" style="left:962.76px;top:562.51px;font-size:17.3px;color:#5a6279;font-weight:normal;letter-spacing:0.241px;transform:scaleX(1.0897);transform-origin:0 50%;-webkit-text-stroke:0.3px #5a6279;">24 July 2025</span>
<div class="a" style="left:1084.6px;top:560.3px;width:5.6px;height:5.6px;background:#ebecf0;border-radius:3px;"></div>
<svg class="a" style="left:1104.8px;top:553.6px;" width="19" height="19" viewBox="0 0 19 19"><path d="M1.2,1.2 H16.6 V11.6 L10.9,16.9 H1.2 Z" fill="none" stroke="#6b7080" stroke-width="1.9" stroke-linejoin="round"/><path d="M16.6,11.2 H10.6 V17 Z" fill="#6b7080"/><g stroke="#6b7080" stroke-width="1.7"><line x1="4.3" y1="5.7" x2="13.4" y2="5.7"/><line x1="4.3" y1="9.4" x2="9" y2="9.4"/></g></svg>
<span class="t" style="left:1131.23px;top:562.51px;font-size:17.3px;color:#5a6279;font-weight:normal;letter-spacing:0.294px;transform:scaleX(1.1218);transform-origin:0 50%;-webkit-text-stroke:0.3px #5a6279;">Construction Site</span>
<div class="a" style="left:1296.0px;top:560.3px;width:5.6px;height:5.6px;background:#ebecf0;border-radius:3px;"></div>
<svg class="a" style="left:1315.8px;top:550.8px;" width="25" height="25" viewBox="0 0 25 25"><circle cx="12.3" cy="12.3" r="12.2" fill="#1fd11f"/><path d="M5.9,12.6 L10.4,16.7 L19.2,7.6" fill="none" stroke="#fff" stroke-width="2.4" stroke-linejoin="miter"/></svg>
<div class="a" style="left:2257.2px;top:508.8px;width:58.6px;height:58.6px;background:#f5f9fd;border-radius:30px;"></div>
<svg class="a" style="left:2281.5px;top:529.5px;overflow:visible;" width="9.5" height="17" viewBox="0 0 9.5 17"><polyline points="1.3,1.3 8.20,8.50 1.3,15.70" fill="none" stroke="#434a63" stroke-width="2.6" stroke-linejoin="miter" stroke-linecap="butt"/></svg>
<svg class="a" style="left:812.5px;top:613px;border-radius:11px" width="103" height="103" viewBox="0 0 103 103"><use href="#p_crane"/></svg>
<span class="t" style="left:933.60px;top:640.26px;font-size:20.6px;color:#13254f;font-weight:normal;letter-spacing:0.231px;transform:scaleX(1.0632);transform-origin:0 50%;-webkit-text-stroke:0.55px #13254f;">Sussex Gardens</span>
<svg class="a" style="left:934.2px;top:679.1px;" width="21" height="22" viewBox="0 0 21 22"><rect x="1" y="3" width="18.4" height="17.6" rx="2" fill="none" stroke="#8d919d" stroke-width="1.8"/><rect x="0.1" y="1.9" width="20.2" height="4.6" rx="1.6" fill="#6b7080"/><rect x="3.4" y="0" width="1.9" height="3" fill="#6b7080"/><rect x="15.2" y="0" width="1.9" height="3" fill="#6b7080"/></svg>
<span class="t" style="left:962.76px;top:689.01px;font-size:17.3px;color:#5a6279;font-weight:normal;letter-spacing:0.241px;transform:scaleX(1.0897);transform-origin:0 50%;-webkit-text-stroke:0.3px #5a6279;">24 July 2025</span>
<div class="a" style="left:1084.6px;top:686.8px;width:5.6px;height:5.6px;background:#ebecf0;border-radius:3px;"></div>
<svg class="a" style="left:1104.8px;top:680.1px;" width="19" height="19" viewBox="0 0 19 19"><path d="M1.2,1.2 H16.6 V11.6 L10.9,16.9 H1.2 Z" fill="none" stroke="#6b7080" stroke-width="1.9" stroke-linejoin="round"/><path d="M16.6,11.2 H10.6 V17 Z" fill="#6b7080"/><g stroke="#6b7080" stroke-width="1.7"><line x1="4.3" y1="5.7" x2="13.4" y2="5.7"/><line x1="4.3" y1="9.4" x2="9" y2="9.4"/></g></svg>
<span class="t" style="left:1131.23px;top:689.01px;font-size:17.3px;color:#5a6279;font-weight:normal;letter-spacing:0.294px;transform:scaleX(1.1218);transform-origin:0 50%;-webkit-text-stroke:0.3px #5a6279;">Construction Site</span>
<div class="a" style="left:2257.2px;top:635.3px;width:58.6px;height:58.6px;background:#f5f9fd;border-radius:30px;"></div>
<svg class="a" style="left:2281.5px;top:656px;overflow:visible;" width="9.5" height="17" viewBox="0 0 9.5 17"><polyline points="1.3,1.3 8.20,8.50 1.3,15.70" fill="none" stroke="#434a63" stroke-width="2.6" stroke-linejoin="miter" stroke-linecap="butt"/></svg>
<div class="a" style="left:812.5px;top:739.5px;width:103px;height:103px;background:#f5f9fd;border-radius:11px;"></div>
<svg class="a" style="left:846px;top:773.0px;" width="37" height="37" viewBox="0 0 37 37"><rect x="0" y="0" width="36.2" height="35.8" rx="3.5" fill="#efeff1"/><path d="M5.2,28.2 L12.4,19.8 L16.4,24.4 L23.1,18 L31.4,28.2 Z" fill="#f8fafc"/></svg>
<span class="t" style="left:933.60px;top:765.86px;font-size:20.6px;color:#13254f;font-weight:normal;letter-spacing:0.298px;transform:scaleX(1.0834);transform-origin:0 50%;-webkit-text-stroke:0.55px #13254f;">Maplewood Plaza</span>
<svg class="a" style="left:934.2px;top:805.6px;" width="21" height="22" viewBox="0 0 21 22"><rect x="1" y="3" width="18.4" height="17.6" rx="2" fill="none" stroke="#8d919d" stroke-width="1.8"/><rect x="0.1" y="1.9" width="20.2" height="4.6" rx="1.6" fill="#6b7080"/><rect x="3.4" y="0" width="1.9" height="3" fill="#6b7080"/><rect x="15.2" y="0" width="1.9" height="3" fill="#6b7080"/></svg>
<span class="t" style="left:962.76px;top:815.51px;font-size:17.3px;color:#5a6279;font-weight:normal;letter-spacing:0.241px;transform:scaleX(1.0897);transform-origin:0 50%;-webkit-text-stroke:0.3px #5a6279;">24 July 2025</span>
<div class="a" style="left:1084.6px;top:813.3px;width:5.6px;height:5.6px;background:#ebecf0;border-radius:3px;"></div>
<svg class="a" style="left:1104.8px;top:806.6px;" width="19" height="19" viewBox="0 0 19 19"><path d="M1.2,1.2 H16.6 V11.6 L10.9,16.9 H1.2 Z" fill="none" stroke="#6b7080" stroke-width="1.9" stroke-linejoin="round"/><path d="M16.6,11.2 H10.6 V17 Z" fill="#6b7080"/><g stroke="#6b7080" stroke-width="1.7"><line x1="4.3" y1="5.7" x2="13.4" y2="5.7"/><line x1="4.3" y1="9.4" x2="9" y2="9.4"/></g></svg>
<span class="t" style="left:1131.23px;top:815.51px;font-size:17.3px;color:#5a6279;font-weight:normal;letter-spacing:0.294px;transform:scaleX(1.1218);transform-origin:0 50%;-webkit-text-stroke:0.3px #5a6279;">Construction Site</span>
<div class="a" style="left:1296.0px;top:813.3px;width:5.6px;height:5.6px;background:#ebecf0;border-radius:3px;"></div>
<svg class="a" style="left:1315.8px;top:803.8px;" width="25" height="25" viewBox="0 0 25 25"><circle cx="12.3" cy="12.3" r="12.2" fill="#1fd11f"/><path d="M5.9,12.6 L10.4,16.7 L19.2,7.6" fill="none" stroke="#fff" stroke-width="2.4" stroke-linejoin="miter"/></svg>
<div class="a" style="left:2257.2px;top:761.8px;width:58.6px;height:58.6px;background:#f5f9fd;border-radius:30px;"></div>
<svg class="a" style="left:2281.5px;top:782.5px;overflow:visible;" width="9.5" height="17" viewBox="0 0 9.5 17"><polyline points="1.3,1.3 8.20,8.50 1.3,15.70" fill="none" stroke="#434a63" stroke-width="2.6" stroke-linejoin="miter" stroke-linecap="butt"/></svg>
<svg class="a" style="left:812.5px;top:936.2px;border-radius:11px" width="103" height="103" viewBox="0 0 103 103"><use href="#p_glass"/></svg>
<span class="t" style="left:933.60px;top:960.56px;font-size:20.6px;color:#13254f;font-weight:normal;letter-spacing:0.276px;transform:scaleX(1.0914);transform-origin:0 50%;-webkit-text-stroke:0.55px #13254f;">Morgan Industrials Park</span>
<svg class="a" style="left:934.2px;top:1002.3000000000001px;" width="21" height="22" viewBox="0 0 21 22"><rect x="1" y="3" width="18.4" height="17.6" rx="2" fill="none" stroke="#8d919d" stroke-width="1.8"/><rect x="0.1" y="1.9" width="20.2" height="4.6" rx="1.6" fill="#6b7080"/><rect x="3.4" y="0" width="1.9" height="3" fill="#6b7080"/><rect x="15.2" y="0" width="1.9" height="3" fill="#6b7080"/></svg>
<span class="t" style="left:962.78px;top:1012.59px;font-size:16.2px;color:#5a6279;font-weight:normal;letter-spacing:0.413px;transform:scaleX(1.1300);transform-origin:0 50%;-webkit-text-stroke:0.3px #5a6279;">24 July 2025</span>
<div class="a" style="left:1084.6px;top:1010.0px;width:5.6px;height:5.6px;background:#ebecf0;border-radius:3px;"></div>
<svg class="a" style="left:1104.8px;top:1004.1px;" width="19" height="19" viewBox="0 0 19 19"><path d="M1.2,1.2 H16.6 V11.6 L10.9,16.9 H1.2 Z" fill="none" stroke="#6b7080" stroke-width="1.9" stroke-linejoin="round"/><path d="M16.6,11.2 H10.6 V17 Z" fill="#6b7080"/><g stroke="#6b7080" stroke-width="1.7"><line x1="4.3" y1="5.7" x2="13.4" y2="5.7"/><line x1="4.3" y1="9.4" x2="9" y2="9.4"/></g></svg>
<span class="t" style="left:1130.88px;top:1011.67px;font-size:20px;color:#6e7589;font-weight:normal;letter-spacing:0.339px;transform:scaleX(1.1213);transform-origin:0 50%;">Construction Site</span>
<div class="a" style="left:1319.4px;top:1010.0px;width:5.6px;height:5.6px;background:#ebecf0;border-radius:3px;"></div>
<svg class="a" style="left:1339.9px;top:1001.1px;" width="25" height="25" viewBox="0 0 25 25"><circle cx="12.3" cy="12.3" r="12.2" fill="#1fd11f"/><path d="M5.9,12.6 L10.4,16.7 L19.2,7.6" fill="none" stroke="#fff" stroke-width="2.4" stroke-linejoin="miter"/></svg>
<div class="a" style="left:2257.2px;top:958.5px;width:58.6px;height:58.6px;background:#f5f9fd;border-radius:30px;"></div>
<svg class="a" style="left:2281.5px;top:979.2px;overflow:visible;" width="9.5" height="17" viewBox="0 0 9.5 17"><polyline points="1.3,1.3 8.20,8.50 1.3,15.70" fill="none" stroke="#434a63" stroke-width="2.6" stroke-linejoin="miter" stroke-linecap="butt"/></svg>
<div class="a" style="left:812.5px;top:1062.8px;width:103px;height:103px;background:#f5f9fd;border-radius:11px;"></div>
<svg class="a" style="left:846px;top:1096.3px;" width="37" height="37" viewBox="0 0 37 37"><rect x="0" y="0" width="36.2" height="35.8" rx="3.5" fill="#efeff1"/><path d="M5.2,28.2 L12.4,19.8 L16.4,24.4 L23.1,18 L31.4,28.2 Z" fill="#f8fafc"/></svg>
<span class="t" style="left:933.60px;top:1090.26px;font-size:20.6px;color:#13254f;font-weight:normal;letter-spacing:0.298px;transform:scaleX(1.0834);transform-origin:0 50%;-webkit-text-stroke:0.55px #13254f;">Maplewood Plaza</span>
<svg class="a" style="left:934.2px;top:1128.9px;" width="21" height="22" viewBox="0 0 21 22"><rect x="1" y="3" width="18.4" height="17.6" rx="2" fill="none" stroke="#8d919d" stroke-width="1.8"/><rect x="0.1" y="1.9" width="20.2" height="4.6" rx="1.6" fill="#6b7080"/><rect x="3.4" y="0" width="1.9" height="3" fill="#6b7080"/><rect x="15.2" y="0" width="1.9" height="3" fill="#6b7080"/></svg>
<span class="t" style="left:962.76px;top:1138.81px;font-size:17.3px;color:#5a6279;font-weight:normal;letter-spacing:0.241px;transform:scaleX(1.0897);transform-origin:0 50%;-webkit-text-stroke:0.3px #5a6279;">24 July 2025</span>
<div class="a" style="left:1084.6px;top:1136.6000000000001px;width:5.6px;height:5.6px;background:#ebecf0;border-radius:3px;"></div>
<svg class="a" style="left:1104.8px;top:1129.9px;" width="19" height="19" viewBox="0 0 19 19"><path d="M1.2,1.2 H16.6 V11.6 L10.9,16.9 H1.2 Z" fill="none" stroke="#6b7080" stroke-width="1.9" stroke-linejoin="round"/><path d="M16.6,11.2 H10.6 V17 Z" fill="#6b7080"/><g stroke="#6b7080" stroke-width="1.7"><line x1="4.3" y1="5.7" x2="13.4" y2="5.7"/><line x1="4.3" y1="9.4" x2="9" y2="9.4"/></g></svg>
<span class="t" style="left:1131.23px;top:1138.81px;font-size:17.3px;color:#5a6279;font-weight:normal;letter-spacing:0.294px;transform:scaleX(1.1218);transform-origin:0 50%;-webkit-text-stroke:0.3px #5a6279;">Construction Site</span>
<div class="a" style="left:2257.2px;top:1085.1px;width:58.6px;height:58.6px;background:#f5f9fd;border-radius:30px;"></div>
<svg class="a" style="left:2281.5px;top:1105.8px;overflow:visible;" width="9.5" height="17" viewBox="0 0 9.5 17"><polyline points="1.3,1.3 8.20,8.50 1.3,15.70" fill="none" stroke="#434a63" stroke-width="2.6" stroke-linejoin="miter" stroke-linecap="butt"/></svg>
<svg class="a" style="left:812.5px;top:1189.2px;border-radius:11px" width="103" height="103" viewBox="0 0 103 103"><use href="#p_crane"/></svg>
<span class="t" style="left:933.60px;top:1216.76px;font-size:20.6px;color:#13254f;font-weight:normal;letter-spacing:0.231px;transform:scaleX(1.0632);transform-origin:0 50%;-webkit-text-stroke:0.55px #13254f;">Sussex Gardens</span>
<svg class="a" style="left:934.2px;top:1255.3000000000002px;" width="21" height="22" viewBox="0 0 21 22"><rect x="1" y="3" width="18.4" height="17.6" rx="2" fill="none" stroke="#8d919d" stroke-width="1.8"/><rect x="0.1" y="1.9" width="20.2" height="4.6" rx="1.6" fill="#6b7080"/><rect x="3.4" y="0" width="1.9" height="3" fill="#6b7080"/><rect x="15.2" y="0" width="1.9" height="3" fill="#6b7080"/></svg>
<span class="t" style="left:962.76px;top:1265.21px;font-size:17.3px;color:#5a6279;font-weight:normal;letter-spacing:0.241px;transform:scaleX(1.0897);transform-origin:0 50%;-webkit-text-stroke:0.3px #5a6279;">24 July 2025</span>
<div class="a" style="left:1084.6px;top:1263.0000000000002px;width:5.6px;height:5.6px;background:#ebecf0;border-radius:3px;"></div>
<svg class="a" style="left:1104.8px;top:1256.3000000000002px;" width="19" height="19" viewBox="0 0 19 19"><path d="M1.2,1.2 H16.6 V11.6 L10.9,16.9 H1.2 Z" fill="none" stroke="#6b7080" stroke-width="1.9" stroke-linejoin="round"/><path d="M16.6,11.2 H10.6 V17 Z" fill="#6b7080"/><g stroke="#6b7080" stroke-width="1.7"><line x1="4.3" y1="5.7" x2="13.4" y2="5.7"/><line x1="4.3" y1="9.4" x2="9" y2="9.4"/></g></svg>
<span class="t" style="left:1131.23px;top:1265.21px;font-size:17.3px;color:#5a6279;font-weight:normal;letter-spacing:0.294px;transform:scaleX(1.1218);transform-origin:0 50%;-webkit-text-stroke:0.3px #5a6279;">Construction Site</span>
<div class="a" style="left:2257.2px;top:1211.5px;width:58.6px;height:58.6px;background:#f5f9fd;border-radius:30px;"></div>
<svg class="a" style="left:2281.5px;top:1232.2px;overflow:visible;" width="9.5" height="17" viewBox="0 0 9.5 17"><polyline points="1.3,1.3 8.20,8.50 1.3,15.70" fill="none" stroke="#434a63" stroke-width="2.6" stroke-linejoin="miter" stroke-linecap="butt"/></svg>
</div></div>
<div id="ph" class="a"></div>
<div id="pscr" class="a"><div class="o a">
<div class="a" style="left:103px;top:339px;width:488px;height:189.8px;background:#0d1f29;"></div>
<svg class="a" style="left:230px;top:338px" width="236" height="34" viewBox="230 338 236 34"><path d="M245.6,338 H450.3 V340.2 A30,29.9 0 0 1 420.3,370.1 H275.6 A30,29.9 0 0 1 245.6,340.2 Z" fill="#f0f4f8"/></svg>
<span class="t" style="left:141.65px;top:376.55px;font-size:19.2px;color:#fff;font-weight:normal;letter-spacing:0.448px;transform:scaleX(1.1275);transform-origin:0 50%;-webkit-text-stroke:0.6px #fff;">9:58</span>
<div class="a" style="left:486.0px;top:379.1px;width:3.9px;height:3.9px;background:#3f4d57;border-radius:2px;"></div>
<div class="a" style="left:492.15px;top:379.1px;width:3.9px;height:3.9px;background:#3f4d57;border-radius:2px;"></div>
<div class="a" style="left:498.3px;top:379.1px;width:3.9px;height:3.9px;background:#3f4d57;border-radius:2px;"></div>
<div class="a" style="left:504.45px;top:379.1px;width:3.9px;height:3.9px;background:#3f4d57;border-radius:2px;"></div>
<svg class="a" style="left:514.6px;top:367.9px;" width="20.6" height="15.45" viewBox="0 0 20 15"><path d="M1.27,5.77 A12.2,12.2 0 0 1 18.53,5.77" fill="none" stroke="#fff" stroke-width="2.9"/><path d="M4.53,9.03 A7.6,7.6 0 0 1 15.27,9.03" fill="none" stroke="#fff" stroke-width="2.9"/><path d="M9.9,14.8 L6.93,11.43 A4.2,4.2 0 0 1 12.87,11.43 Z" fill="#fff"/></svg>
<svg class="a" style="left:541.4px;top:368.7px;" width="33" height="15" viewBox="0 0 33 15"><rect x="0.7" y="0.7" width="27.7" height="13.1" rx="4.2" fill="none" stroke="#6f7d84" stroke-width="1.3"/><rect x="2.8" y="2.8" width="23.5" height="8.9" rx="2.4" fill="#fff"/><path d="M30,5 Q32,5.8 32,7.25 Q32,8.7 30,9.5 Z" fill="#6f7d84"/></svg>
<svg class="a" style="left:549.3px;top:420.8px;" width="21.4" height="21.4" viewBox="0 0 21.4 21.4"><g stroke="#1aa9d9" stroke-width="2" stroke-linecap="butt"><line x1="0" y1="10.7" x2="21.4" y2="10.7"/><line x1="10.7" y1="0" x2="10.7" y2="21.4"/></g></svg>
<span class="t" style="left:123.69px;top:492.40px;font-size:43.3px;color:#fff;font-weight:bold;letter-spacing:-0.205px;transform:scaleX(1.0002);transform-origin:0 50%;">Projects</span>
<div class="a" style="left:103px;top:528.8px;width:488px;height:36px;background:#fafbfd;"></div>
<span class="t" style="left:122.41px;top:548.94px;font-size:14.6px;color:#617489;font-weight:normal;letter-spacing:1.406px;transform:scaleX(1.0272);transform-origin:0 50%;-webkit-text-stroke:0.6px #617489;">JANUARY 2017</span>
<div class="a" style="left:255.7px;top:548.0999999999999px;width:15.699999999999989px;height:1.6px;background:#617489;"></div>
<span class="t" style="left:282.04px;top:548.94px;font-size:14.6px;color:#617489;font-weight:normal;letter-spacing:1.185px;transform:scaleX(1.0216);transform-origin:0 50%;-webkit-text-stroke:0.6px #617489;">3 PROJECTS</span>
<div class="a" style="left:103px;top:820px;width:488px;height:36px;background:#fafbfd;"></div>
<span class="t" style="left:121.39px;top:840.14px;font-size:14.6px;color:#617489;font-weight:normal;letter-spacing:1.210px;transform:scaleX(1.0223);transform-origin:0 50%;-webkit-text-stroke:0.6px #617489;">DECEMBER 2016</span>
<div class="a" style="left:269px;top:839.3px;width:16px;height:1.6px;background:#617489;"></div>
<span class="t" style="left:293.88px;top:840.14px;font-size:14.6px;color:#617489;font-weight:normal;letter-spacing:1.250px;transform:scaleX(1.0234);transform-origin:0 50%;-webkit-text-stroke:0.6px #617489;">10 PROJECTS</span>
<svg class="a" style="left:121.5px;top:581.0px" width="52" height="52" viewBox="0 0 52 52"><use href="#t1"/></svg>
<span class="t" style="left:187.30px;top:593.38px;font-size:22px;color:#0f2530;font-weight:normal;letter-spacing:0.156px;transform:scaleX(1.0465);transform-origin:0 50%;-webkit-text-stroke:0.9px #0f2530;">Morgan Industrial Park</span>
<span class="t" style="left:187.20px;top:623.02px;font-size:19px;color:#7689a0;font-weight:normal;letter-spacing:0.015px;transform:scaleX(1.0042);transform-origin:0 50%;">MORGAN_Jan17 - Jan 5, 2017</span>
<svg class="a" style="left:562.4px;top:600.5px;overflow:visible;" width="9.6" height="14.7" viewBox="0 0 9.6 14.7"><polyline points="1.0,1.0 8.60,7.35 1.0,13.70" fill="none" stroke="#c3c7cc" stroke-width="2" stroke-linejoin="miter" stroke-linecap="butt"/></svg>
<div class="a" style="left:121.5px;top:649.8px;width:470px;height:1.1px;background:#e8e9ec;"></div>
<svg class="a" style="left:121.5px;top:666.0px" width="52" height="52" viewBox="0 0 52 52"><use href="#t2"/></svg>
<span class="t" style="left:187.30px;top:678.38px;font-size:22px;color:#0f2530;font-weight:normal;letter-spacing:0.097px;transform:scaleX(1.0239);transform-origin:0 50%;-webkit-text-stroke:0.9px #0f2530;">Sussex Gardens</span>
<span class="t" style="left:187.20px;top:708.02px;font-size:19px;color:#7689a0;font-weight:normal;letter-spacing:0.047px;transform:scaleX(1.0146);transform-origin:0 50%;">PSG10 - Jan 3, 2017</span>
<svg class="a" style="left:562.4px;top:685.5px;overflow:visible;" width="9.6" height="14.7" viewBox="0 0 9.6 14.7"><polyline points="1.0,1.0 8.60,7.35 1.0,13.70" fill="none" stroke="#c3c7cc" stroke-width="2" stroke-linejoin="miter" stroke-linecap="butt"/></svg>
<div class="a" style="left:121.5px;top:734.8px;width:470px;height:1.1px;background:#e8e9ec;"></div>
<svg class="a" style="left:121.5px;top:751.0px" width="52" height="52" viewBox="0 0 52 52"><use href="#t3"/></svg>
<span class="t" style="left:187.30px;top:763.38px;font-size:22px;color:#0f2530;font-weight:normal;letter-spacing:0.144px;transform:scaleX(1.0433);transform-origin:0 50%;-webkit-text-stroke:0.9px #0f2530;">26 Hall Drive</span>
<span class="t" style="left:187.20px;top:793.02px;font-size:19px;color:#7689a0;font-weight:normal;letter-spacing:0.130px;transform:scaleX(1.0416);transform-origin:0 50%;">HD26006 - Jan 1, 2017</span>
<svg class="a" style="left:562.4px;top:770.5px;overflow:visible;" width="9.6" height="14.7" viewBox="0 0 9.6 14.7"><polyline points="1.0,1.0 8.60,7.35 1.0,13.70" fill="none" stroke="#c3c7cc" stroke-width="2" stroke-linejoin="miter" stroke-linecap="butt"/></svg>
<svg class="a" style="left:121.5px;top:872.2px" width="52" height="52" viewBox="0 0 52 52"><use href="#t4"/></svg>
<span class="t" style="left:187.30px;top:884.58px;font-size:22px;color:#0f2530;font-weight:normal;letter-spacing:0.165px;transform:scaleX(1.0474);transform-origin:0 50%;-webkit-text-stroke:0.9px #0f2530;">Bromley High Street</span>
<span class="t" style="left:187.20px;top:914.22px;font-size:19px;color:#7689a0;font-weight:normal;letter-spacing:0.124px;transform:scaleX(1.0383);transform-origin:0 50%;">BHSP50 - Dec 29, 2016</span>
<svg class="a" style="left:562.4px;top:891.7px;overflow:visible;" width="9.6" height="14.7" viewBox="0 0 9.6 14.7"><polyline points="1.0,1.0 8.60,7.35 1.0,13.70" fill="none" stroke="#c3c7cc" stroke-width="2" stroke-linejoin="miter" stroke-linecap="butt"/></svg>
<div class="a" style="left:121.5px;top:941.0px;width:470px;height:1.1px;background:#e8e9ec;"></div>
<svg class="a" style="left:121.5px;top:957.2px" width="52" height="52" viewBox="0 0 52 52"><use href="#t5"/></svg>
<span class="t" style="left:187.30px;top:969.58px;font-size:22px;color:#0f2530;font-weight:normal;letter-spacing:0.104px;transform:scaleX(1.0288);transform-origin:0 50%;-webkit-text-stroke:0.9px #0f2530;">91 Lockyer Place</span>
<span class="t" style="left:187.20px;top:999.22px;font-size:19px;color:#7689a0;font-weight:normal;letter-spacing:0.066px;transform:scaleX(1.0208);transform-origin:0 50%;">LP911001 - Dec 27, 2016</span>
<svg class="a" style="left:562.4px;top:976.7px;overflow:visible;" width="9.6" height="14.7" viewBox="0 0 9.6 14.7"><polyline points="1.0,1.0 8.60,7.35 1.0,13.70" fill="none" stroke="#c3c7cc" stroke-width="2" stroke-linejoin="miter" stroke-linecap="butt"/></svg>
<div class="a" style="left:121.5px;top:1026.0px;width:470px;height:1.1px;background:#e8e9ec;"></div>
<svg class="a" style="left:121.5px;top:1042.2px" width="52" height="52" viewBox="0 0 52 52"><use href="#t6"/></svg>
<span class="t" style="left:187.30px;top:1054.58px;font-size:22px;color:#0f2530;font-weight:normal;letter-spacing:0.098px;transform:scaleX(1.0277);transform-origin:0 50%;-webkit-text-stroke:0.9px #0f2530;">31 Baker Street</span>
<span class="t" style="left:187.20px;top:1084.22px;font-size:19px;color:#7689a0;font-weight:normal;letter-spacing:0.083px;transform:scaleX(1.0258);transform-origin:0 50%;">P31BS - Dec 25, 2016</span>
<svg class="a" style="left:562.4px;top:1061.7px;overflow:visible;" width="9.6" height="14.7" viewBox="0 0 9.6 14.7"><polyline points="1.0,1.0 8.60,7.35 1.0,13.70" fill="none" stroke="#c3c7cc" stroke-width="2" stroke-linejoin="miter" stroke-linecap="butt"/></svg>
<div class="a" style="left:121.5px;top:1111.0px;width:470px;height:1.1px;background:#e8e9ec;"></div>
<svg class="a" style="left:121.5px;top:1127.2px" width="52" height="52" viewBox="0 0 52 52"><use href="#t7"/></svg>
<span class="t" style="left:187.30px;top:1139.58px;font-size:22px;color:#0f2530;font-weight:normal;letter-spacing:0.118px;transform:scaleX(1.0336);transform-origin:0 50%;-webkit-text-stroke:0.9px #0f2530;">19 Penry Street</span>
<span class="t" style="left:187.20px;top:1169.22px;font-size:19px;color:#7689a0;font-weight:normal;letter-spacing:0.036px;transform:scaleX(1.0106);transform-origin:0 50%;">PENSSTP19 - Dec 19, 2016</span>
<svg class="a" style="left:562.4px;top:1146.7px;overflow:visible;" width="9.6" height="14.7" viewBox="0 0 9.6 14.7"><polyline points="1.0,1.0 8.60,7.35 1.0,13.70" fill="none" stroke="#c3c7cc" stroke-width="2" stroke-linejoin="miter" stroke-linecap="butt"/></svg>
<div class="a" style="left:103px;top:1190px;width:488px;height:200px;background:#0d1f29;"></div>
<svg class="a" style="left:171.8px;top:1198.9px;" width="24" height="32" viewBox="0 0 24 32"><path d="M0,0 H12.9 L23.6,10.9 V31.2 H0 Z" fill="#1aa9d9"/><path d="M12.9,0 V10.9 H23.6" fill="none" stroke="#0d1f29" stroke-width="0.9"/><g stroke="#0d1f29" stroke-width="1"><path d="M3.9,6.6 H9.4 M3.9,10.6 H9.4 M3.9,14.3 H19.3 M3.9,18.5 H19.3 M3.9,22.7 H19.3"/></g></svg>
<svg class="a" style="left:326.6px;top:1198.9px;" width="41" height="32" viewBox="0 0 41 32"><g fill="none" stroke="#8d9599" stroke-width="1.7" stroke-linejoin="round" transform="translate(0.3,0.9) scale(0.985,0.965)"><path d="M15.9,23.4 H7.3 A7.2,7.2 0 1 1 11.2,10.2 A9,9 0 1 1 28.9,9.7 A7.5,7.5 0 1 1 33,23.4 H25.3"/><path d="M15.9,23.4 V17.4 M25.3,23.4 V27.6"/></g><path d="M15.9,14.2 L19.5,18 H12.3 Z M25.2,31.1 L28.9,27.2 H21.5 Z" fill="#8d9599"/></svg>
<svg class="a" style="left:494.3px;top:1198.9px;" width="32" height="32" viewBox="0 0 32 32"><path d="M12.98,5.14 L13.68,1.13 L17.62,1.13 L18.32,5.14 L21.16,6.31 L24.49,3.98 L27.27,6.76 L24.94,10.09 L26.11,12.93 L30.12,13.63 L30.12,17.57 L26.11,18.27 L24.94,21.11 L27.27,24.44 L24.49,27.22 L21.16,24.89 L18.32,26.06 L17.62,30.07 L13.68,30.07 L12.98,26.06 L10.14,24.89 L6.81,27.22 L4.03,24.44 L6.36,21.11 L5.19,18.27 L1.18,17.57 L1.18,13.63 L5.19,12.93 L6.36,10.09 L4.03,6.76 L6.81,3.98 L10.14,6.31Z" fill="none" stroke="#8d9599" stroke-width="1.6" stroke-linejoin="round"/><circle cx="15.65" cy="15.6" r="5.4" fill="none" stroke="#8d9599" stroke-width="1.6"/></svg>
<span class="t" style="left:139.30px;top:1245.03px;font-size:12.6px;color:#1aa9d9;font-weight:normal;letter-spacing:0.182px;transform:scaleX(1.0824);transform-origin:0 50%;-webkit-text-stroke:.22px #1aa9d9;">On my iPhone</span>
<span class="t" style="left:328.10px;top:1245.03px;font-size:12.6px;color:#8d979c;font-weight:normal;letter-spacing:0.274px;transform:scaleX(1.1167);transform-origin:0 50%;-webkit-text-stroke:.22px #8d979c;">Cloud</span>
<span class="t" style="left:482.98px;top:1245.03px;font-size:12.6px;color:#8d979c;font-weight:normal;letter-spacing:0.281px;transform:scaleX(1.1300);transform-origin:0 50%;-webkit-text-stroke:.22px #8d979c;">Settings</span>
<div class="a" style="left:259.5px;top:1281px;width:175.5px;height:6.6px;background:#4a4a4a;border-radius:3.3px;"></div>
</div></div>
</div></body></html>
